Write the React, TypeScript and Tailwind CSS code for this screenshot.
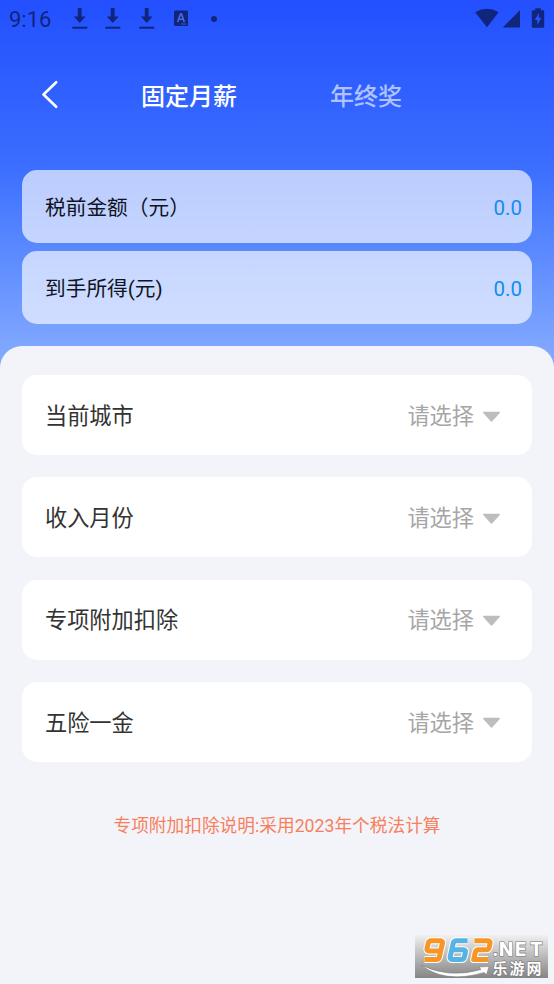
const fields = ["当前城市", "收入月份", "专项附加扣除", "五险一金"];

function DownloadIcon() {
  return (
    <svg width="16" height="22" viewBox="0 0 16 22" fill="#10257c">
      <path d="M5.8 0h3.8v8.6h4.1L7.7 15 1.8 8.6h4z" />
      <path d="M.3 18.7h15v2H.3z" />
    </svg>
  );
}

function StatusBar() {
  return (
    <div className="flex h-10 items-start text-[#10257c]">
      <span className="ml-[9px] mt-[6px] w-[62.500px] font-['Roboto'] text-[22px] leading-7">9:16</span>
      <div className="mt-[8px] flex gap-[17.8px]">
        <DownloadIcon />
        <DownloadIcon />
        <DownloadIcon />
      </div>
      <svg className="ml-[18px] mt-[10px]" width="16" height="17" viewBox="0 0 16 17">
        <rect x="1" y="0.5" width="14" height="15.5" rx="1.3" fill="#10257c" />
        <path d="M4.7 12 7.5 4h1l2.8 8M5.7 9.2h4.6" fill="none" stroke="#496be1" strokeWidth="1.6" />
        <path d="M8 14h5" stroke="#496be1" strokeWidth="0.8" />
      </svg>
      <span className="ml-[22px] mt-[15.5px] size-[6px] rounded-full bg-[#10257c]" />
      <svg className="ml-auto mr-[-1px] mt-[7px]" width="80" height="22" viewBox="0 0 80 22" fill="#10257c">
        <path d="M.2 5.200Q12-1.600 23.600 5.200L12 20.300z" />
        <path d="M45 3.300v17.200H27.800z" />
        <path
          fillRule="evenodd"
          d="M60.200 1.200h5.600v2h2.200q1.200 0 1.200 1.200v15.200q0 1.200-1.200 1.200h-10q-1.200 0-1.200-1.200V4.400q0-1.200 1.200-1.200h2.200zM63.900 6l-4.200 7h2.600v5l4.100-7.200h-2.500z"
        />
      </svg>
    </div>
  );
}

function AmountRow({ label }: { label: string }) {
  return (
    <div className="flex h-[73px] items-center justify-between rounded-[15px] bg-white/65 pl-[23px] pr-[10px]">
      <span className="mt-[5px] text-[20.700px] text-[#101322]">{label}</span>
      <span className="mt-[3px] font-['Roboto'] text-[20.500px] text-[#168bf0]">0.0</span>
    </div>
  );
}

function SelectRow({ label }: { label: string }) {
  return (
    <div className="flex h-[80px] items-center rounded-[15px] bg-white pl-[23px] pr-[31px]">
      <span className="mt-[3px] text-[22.2px] text-[#333]">{label}</span>
      <span className="ml-auto mr-[8px] mt-[3px] text-[22.2px] text-[#a6a6a6]">请选择</span>
      <svg className="mt-[3px]" width="19" height="12" viewBox="0 0 19 12">
        <path d="M1.800 1.500h15.400L9.500 10z" fill="#bdbdbd" stroke="#bdbdbd" strokeWidth="1.500" strokeLinejoin="round" />
      </svg>
    </div>
  );
}

const nine = "M25.500 17H15q-2.600 0-2-2.600l1.200-5Q14.800 6.800 17.400 6.800h9q2.600 0 2 2.600l-3 13.500q-.6 2.600-3.200 2.600H10.500";
const six = "M53.500 6.800H42.400q-2.600 0-3.200 2.600l-3 13.500q-.6 2.600 2 2.600h9q2.600 0 3.200-2.600l1-4.500q.6-2.600-2-2.600H38.500";
const two = "M60.500 6.800H74q2.600 0 2 2.600l-.8 3.800q-.6 2.600-3.200 2.600h-7.500q-2.600 0-3.200 2.600l-1.600 7.100H74";

function SiteBadge() {
  return (
    <svg className="absolute left-[414px] top-[934px]" width="135" height="45" viewBox="0 0 135 45">
      <defs>
        <linearGradient id="plate" x1="0" y1="0" x2="0" y2="1">
          <stop offset="0" stopColor="#f0f0f0" />
          <stop offset="0.5" stopColor="#b9b9b9" />
          <stop offset="1" stopColor="#858585" />
        </linearGradient>
      </defs>
      <rect x="1" y="1" width="133" height="43" fill="url(#plate)" />
      <g fill="none" strokeLinejoin="round">
        <g stroke="#fff" strokeWidth="7">
          <path d={nine} />
          <path d={six} />
          <path d={two} />
        </g>
        <g strokeWidth="5">
          <path stroke="#f79527" d={nine} />
          <path stroke="#58b3e5" d={six} />
          <path stroke="#f79527" d={two} />
        </g>
      </g>
      <path d="M7 31q28 14 60 4.500l-2-2.500 10-.5-2.500 8-2.500-2Q31 50 7 31z" fill="#fff" stroke="#777" strokeWidth="0.500" />
      <g fill="#fff" stroke="#777" strokeWidth="1.200" paintOrder="stroke">
        <text x="78 85 101 116" y="22" fontFamily="Inter, Liberation Sans, sans-serif" fontSize="18.500" fontWeight="800">
          .NET
        </text>
        <text x="78.500 95.500 112.500" y="39.500" fontFamily="Noto Sans CJK SC, sans-serif" fontSize="15" fontWeight="700">
          乐游网
        </text>
      </g>
    </svg>
  );
}

export default function App() {
  return (
    <div className="relative h-[984px] w-[554px] overflow-hidden bg-gradient-to-b from-[#234fff] from-0% via-[#3b6dff] via-[165px] to-[#86abff] to-[365px] font-['Roboto','Noto_Sans_CJK_SC',sans-serif]">
      <StatusBar />
      <header className="flex h-[130px] items-start pt-[40px]">
        <svg className="ml-[40px]" width="20" height="29" viewBox="0 0 20 29">
          <path d="M16.200 2.200 3.500 14.500 16.200 26.800" fill="none" stroke="#fff" strokeWidth="2.600" strokeLinecap="round" strokeLinejoin="round" />
        </svg>
        <span className="ml-[81px] w-[189px] text-[24px] font-medium leading-[34px] text-white">固定月薪</span>
        <span className="text-[24px] font-medium leading-[34px] text-[#b0c2ff]">年终奖</span>
      </header>
      <section className="flex flex-col gap-[8px] px-[22px]">
        <AmountRow label="税前金额（元）" />
        <AmountRow label="到手所得(元)" />
      </section>
      <main className="mt-[22px] h-[638px] rounded-t-[22px] bg-[#f3f4f9] px-[22px] pt-[29px]">
        <div className="flex flex-col gap-[22.300px]">
          {fields.map((label) => (
            <SelectRow key={label} label={label} />
          ))}
        </div>
        <p className="mt-[51px] text-center text-[17.700px] leading-[26px] text-[#f77f5c]">专项附加扣除说明:采用2023年个税法计算</p>
      </main>
      <SiteBadge />
    </div>
  );
}
